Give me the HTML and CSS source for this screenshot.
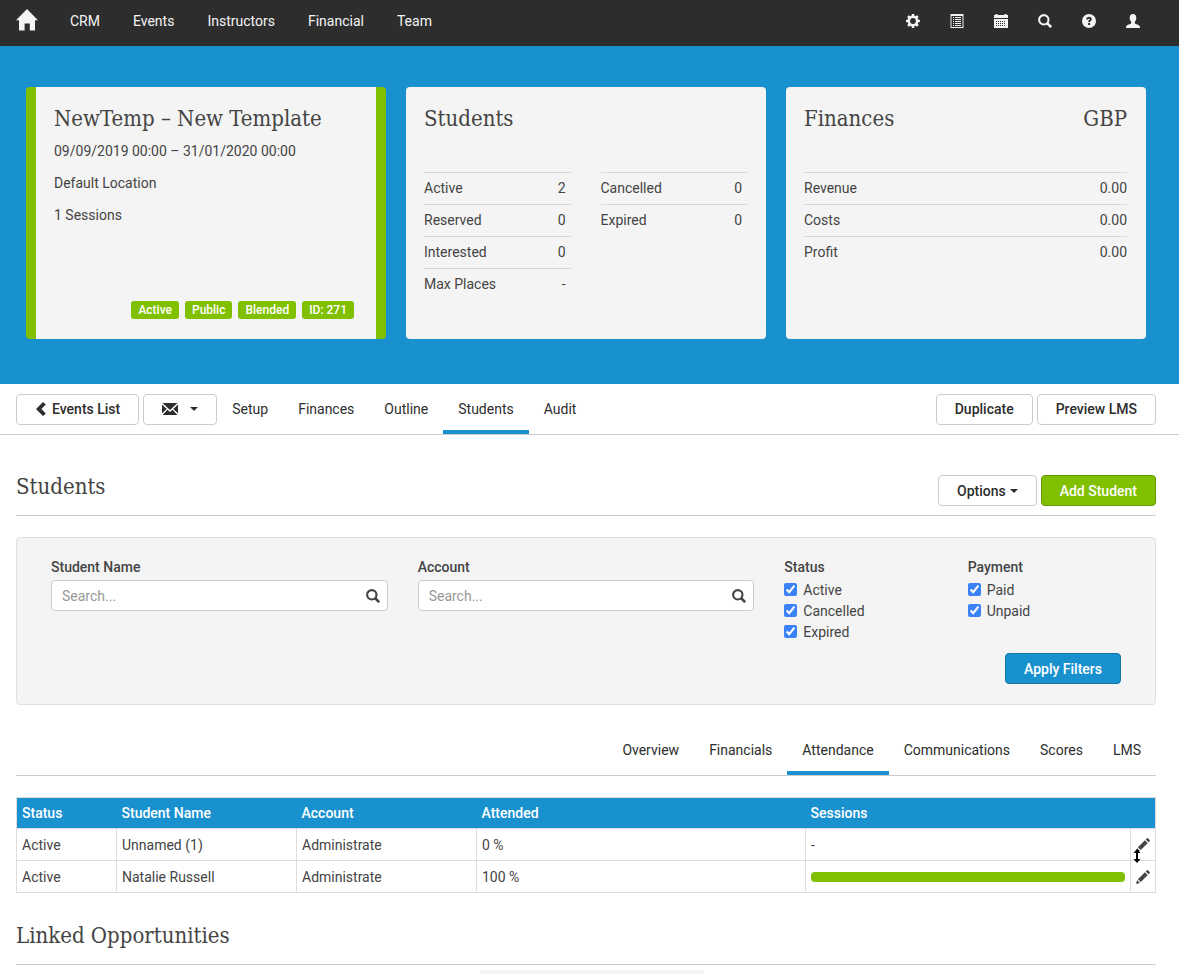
FILE: index.html
```html
<!DOCTYPE html>
<html lang="en">
<head>
    <meta charset="UTF-8">
    <meta name="viewport" content="width=device-width, initial-scale=1.0">
    <title>NewTemp – New Template</title>
    <link rel="stylesheet" href="styles.css">
</head>
<body>
    <svg class="sprite" aria-hidden="true">
        <symbol id="icon-search" viewBox="0 0 14 14">
            <circle cx="5.8" cy="5.8" r="4.7" fill="none" stroke="currentColor" stroke-width="2.1"/>
            <path d="M9 9l4.2 4.2" stroke="currentColor" stroke-width="2.6"/>
        </symbol>
        <symbol id="icon-pencil" viewBox="0 0 14 14">
            <path d="M0 14l1.100-4 2.900 2.900zM1.900 9.200l7-7 2.900 2.900-7 7zM9.700 1.400L10.900.300q.5-.5 1 0l1.800 1.800q.5.500 0 1L12.600 4.300z"/>
        </symbol>
        <symbol id="icon-caret" viewBox="0 0 8 4">
            <path d="M0 0h8L4 4z"/>
        </symbol>
    </svg>

    <header class="topbar">
        <nav class="topbar-nav">
            <a href="#" class="home" aria-label="Home">
                <svg class="icon-home" viewBox="0 0 22 22"><path d="M11 0L22 11.300h-3V21.500h-5.200v-7H8.600v7H3V11.300H0z"/></svg>
            </a>
            <a href="#">CRM</a>
            <a href="#">Events</a>
            <a href="#">Instructors</a>
            <a href="#">Financial</a>
            <a href="#">Team</a>
        </nav>
        <nav class="topbar-icons">
            <a href="#" aria-label="Settings">
                <svg class="icon" viewBox="0 0 14 14"><path fill-rule="evenodd" d="M5.900 0h2.200l.4 1.800 1 .4 1.500-1L12.600 2.800l-1 1.600.4 1 1.900.4v2.300l-1.800.4-.4 1 1 1.600-1.600 1.600-1.600-1-1 .4-.4 1.900H5.900l-.4-1.800-1-.4-1.600 1-1.600-1.600 1-1.600-.4-1L0 8.100V5.900l1.800-.4.4-1-1-1.600 1.600-1.600 1.600 1 1-.4zM7 4.100a2.900 2.900 0 1 0 0 5.800 2.900 2.900 0 0 0 0-5.800z"/></svg>
            </a>
            <a href="#" aria-label="Lists">
                <svg class="icon" viewBox="0 0 14 14"><path fill-rule="evenodd" d="M.5 0h13v14H.5zM1.500 2v11h11V2zM3 3h1v1H3zM5 3h6v1H5zM3 5h1v1H3zM5 5h6v1H5zM3 7h1v1H3zM5 7h6v1H5zM3 9h1v1H3zM5 9h6v1H5zM3 11h1v1H3zM5 11h6v1H5z"/></svg>
            </a>
            <a href="#" aria-label="Calendar">
                <svg class="icon" viewBox="0 0 14 14"><path fill-rule="evenodd" d="M1.500 0h2v1h7V0h2v1H14v3H0V1h1.500zM0 5h14v9H0zM2 7v1h1V7zM4 7v1h1V7zM6 7v1h1V7zM8 7v1h1V7zM10 7v1h1V7zM2 9v1h1V9zM4 9v1h1V9zM6 9v1h1V9zM8 9v1h1V9zM10 9v1h1V9zM2 11v1h1v-1zM4 11v1h1v-1zM6 11v1h1v-1zM8 11v1h1v-1zM10 11v1h1v-1z"/></svg>
            </a>
            <a href="#" aria-label="Search"><svg class="icon"><use href="#icon-search"/></svg></a>
            <a href="#" aria-label="Help">
                <svg class="icon" viewBox="0 0 14 14"><circle cx="7" cy="7" r="7"/><path class="cutout" d="M4.300 5.500C4.300 3.600 5.500 2.700 7.100 2.700s2.700 1 2.700 2.500c0 1.600-1.700 1.700-1.700 2.900H6.100c0-2.100 1.600-1.900 1.600-2.900 0-.9-1.400-.8-1.400.3zM6.100 9.100h2v2h-2z"/></svg>
            </a>
            <a href="#" aria-label="Account">
                <svg class="icon" viewBox="0 0 14 14"><path d="M7 0c2.200 0 3.300 1.500 3.300 3.800 0 1.700-.5 3-1.500 4v1.400c.5.900 4.400 1.500 4.900 2.900.3.600.3 1.400.3 1.900H0c0-.5 0-1.300.3-1.900.5-1.400 4.400-2 4.900-2.900V7.800c-1-1-1.500-2.300-1.500-4C3.700 1.500 4.800 0 7 0z"/></svg>
            </a>
        </nav>
    </header>

    <section class="hero">
        <article class="card card-event">
            <h2 class="title">NewTemp – New Template</h2>
            <p>09/09/2019 00:00 – 31/01/2020 00:00</p>
            <p>Default Location</p>
            <p>1 Sessions</p>
            <div class="badges">
                <span class="badge">Active</span>
                <span class="badge">Public</span>
                <span class="badge">Blended</span>
                <span class="badge">ID: 271</span>
            </div>
        </article>

        <article class="card">
            <h2 class="title">Students</h2>
            <div class="stats">
                <dl class="stat-list stat-list-inset">
                    <div><dt>Active</dt><dd>2</dd></div>
                    <div><dt>Reserved</dt><dd>0</dd></div>
                    <div><dt>Interested</dt><dd>0</dd></div>
                    <div><dt>Max Places</dt><dd>-</dd></div>
                </dl>
                <dl class="stat-list stat-list-inset">
                    <div><dt>Cancelled</dt><dd>0</dd></div>
                    <div><dt>Expired</dt><dd>0</dd></div>
                </dl>
            </div>
        </article>

        <article class="card">
            <div class="card-heading">
                <h2 class="title">Finances</h2>
                <span class="title">GBP</span>
            </div>
            <div class="stats">
                <dl class="stat-list">
                    <div><dt>Revenue</dt><dd>0.00</dd></div>
                    <div><dt>Costs</dt><dd>0.00</dd></div>
                    <div><dt>Profit</dt><dd>0.00</dd></div>
                </dl>
            </div>
        </article>
    </section>

    <div class="toolbar">
        <button class="btn" type="button">
            <svg class="icon icon-back" viewBox="0 0 14 14"><path d="M8 0l2.800 2.500L6.300 7l4.500 4.500L8 14 1 7z"/></svg>
            Events List
        </button>
        <button class="btn btn-mail" type="button" aria-label="Email">
            <svg class="icon-mail" viewBox="0 0 16 14"><path d="M.5 1h15L8 8zM0 2.500L4.800 7 0 11.300zM16 2.500v8.800L11.200 7zM.5 13l5-5.200L8 10l2.500-2.200 5 5.200z"/></svg>
            <svg class="caret"><use href="#icon-caret"/></svg>
        </button>
        <nav class="tabs">
            <a href="#">Setup</a>
            <a href="#">Finances</a>
            <a href="#">Outline</a>
            <a href="#" class="active">Students</a>
            <a href="#">Audit</a>
        </nav>
        <div class="actions">
            <button class="btn" type="button">Duplicate</button>
            <button class="btn" type="button">Preview LMS</button>
        </div>
    </div>

    <main class="content">
        <div class="page-header">
            <h1 class="title">Students</h1>
            <div class="actions">
                <button class="btn" type="button">Options <svg class="caret"><use href="#icon-caret"/></svg></button>
                <button class="btn btn-success" type="button">Add Student</button>
            </div>
        </div>

        <form class="filters">
            <div class="filter-grid">
                <div class="field">
                    <label for="studentName">Student Name</label>
                    <div class="search-box">
                        <input type="text" id="studentName" placeholder="Search...">
                        <svg class="icon"><use href="#icon-search"/></svg>
                    </div>
                </div>
                <div class="field">
                    <label for="account">Account</label>
                    <div class="search-box">
                        <input type="text" id="account" placeholder="Search...">
                        <svg class="icon"><use href="#icon-search"/></svg>
                    </div>
                </div>
                <fieldset class="field">
                    <legend>Status</legend>
                    <label class="check"><input type="checkbox" checked> Active</label>
                    <label class="check"><input type="checkbox" checked> Cancelled</label>
                    <label class="check"><input type="checkbox" checked> Expired</label>
                </fieldset>
                <fieldset class="field">
                    <legend>Payment</legend>
                    <label class="check"><input type="checkbox" checked> Paid</label>
                    <label class="check"><input type="checkbox" checked> Unpaid</label>
                </fieldset>
            </div>
            <div class="filter-actions">
                <button class="btn btn-primary" type="button">Apply Filters</button>
            </div>
        </form>

        <nav class="tabs tabs-right">
            <a href="#">Overview</a>
            <a href="#">Financials</a>
            <a href="#" class="active">Attendance</a>
            <a href="#">Communications</a>
            <a href="#">Scores</a>
            <a href="#">LMS</a>
        </nav>

        <table class="students">
            <colgroup>
                <col class="col-status">
                <col class="col-name">
                <col class="col-name">
                <col class="col-attended">
                <col>
                <col class="col-edit">
            </colgroup>
            <thead>
                <tr>
                    <th>Status</th>
                    <th>Student Name</th>
                    <th>Account</th>
                    <th>Attended</th>
                    <th colspan="2">Sessions</th>
                </tr>
            </thead>
            <tbody>
                <tr>
                    <td>Active</td>
                    <td>Unnamed (1)</td>
                    <td>Administrate</td>
                    <td>0 %</td>
                    <td>-</td>
                    <td class="edit">
                        <a href="#" aria-label="Edit"><svg class="icon"><use href="#icon-pencil"/></svg></a>
                        <svg class="resize-cursor" viewBox="0 0 8 14"><path d="M4 0l3.500 4H5v6h2.500L4 14 .5 10H3V4H.5z"/></svg>
                    </td>
                </tr>
                <tr>
                    <td>Active</td>
                    <td>Natalie Russell</td>
                    <td>Administrate</td>
                    <td>100 %</td>
                    <td><div class="progress"><div class="progress-bar" style="width: 100%"></div></div></td>
                    <td class="edit">
                        <a href="#" aria-label="Edit"><svg class="icon"><use href="#icon-pencil"/></svg></a>
                    </td>
                </tr>
            </tbody>
        </table>

        <div class="page-header page-header-linked">
            <h2 class="title">Linked Opportunities</h2>
        </div>
    </main>

    <div class="drawer-handle"></div>
</body>
</html>
```

FILE: styles.css
```css
* {
    box-sizing: border-box;
}
body {
    margin: 0;
    font-family: Roboto, "Liberation Sans", sans-serif;
    font-size: 14px;
    line-height: 20px;
    color: #444;
    background-color: #fff;
    overflow-x: hidden;
}
h1, h2, p, dl, dd, fieldset {
    margin: 0;
}
a {
    color: inherit;
    text-decoration: none;
}
svg {
    display: block;
    fill: currentColor;
}
.sprite {
    display: none;
}
.icon {
    width: 14px;
    height: 14px;
}
.caret {
    width: 8px;
    height: 4px;
}
.title {
    font-family: "Roboto Slab", "DejaVu Serif Condensed", "DejaVu Serif", serif;
    font-size: 22px;
    font-weight: 300;
    line-height: 24px;
}

/* Top bar */
.topbar {
    display: flex;
    justify-content: space-between;
    height: 46px;
    padding: 0 31px 4px 16px;
    background-color: #2d2d2d;
    color: #f4f4f4;
}
.topbar-nav, .topbar-icons {
    display: flex;
    align-items: center;
}
.topbar-nav {
    gap: 33px;
}
.topbar-nav .home {
    margin-right: -1px;
    padding-bottom: 2px;
}
.icon-home {
    width: 22px;
    height: 22px;
}
.topbar-icons {
    gap: 30px;
    padding-right: 8px;
}
.cutout {
    fill: #2d2d2d;
}

/* Event summary */
.hero {
    display: grid;
    grid-template-columns: repeat(3, 1fr);
    gap: 20px;
    padding: 41px 33px 45px 26px;
    background-color: #1a91cf;
}
.card {
    display: flex;
    flex-direction: column;
    min-height: 252px;
    padding: 20px 19px 20px 18px;
    border-radius: 4px;
    background-color: #f4f4f4;
}
.card-event {
    border: solid #80c000;
    border-width: 0 10px;
}
.card p {
    margin-top: 12px;
}
.card .title + p {
    margin-top: 10px;
}
.card-heading {
    display: flex;
    justify-content: space-between;
}
.badges {
    display: flex;
    justify-content: flex-end;
    gap: 6px;
    margin-top: auto;
    padding-right: 3px;
}
.badge {
    padding: 0 7px;
    border-radius: 3px;
    background-color: #80c000;
    color: #fff;
    font-size: 12px;
    font-weight: 500;
    line-height: 18px;
}
.stats {
    display: flex;
    gap: 30px;
    margin-top: 41px;
}
.stat-list {
    flex: 1;
}
.stat-list div {
    display: flex;
    justify-content: space-between;
    padding: 5px 0 6px;
    border-top: 1px solid #d9d9d9;
}
.stat-list-inset div {
    padding-right: 5px;
}

/* Buttons */
.btn {
    display: flex;
    align-items: center;
    height: 31px;
    padding: 0 18px;
    border: 1px solid #ccc;
    border-radius: 4px;
    background-color: #fff;
    color: #2d2d2d;
    font: inherit;
    font-weight: 500;
    white-space: nowrap;
    cursor: pointer;
}
.btn .caret {
    margin-left: 4px;
}
.btn-success {
    border-color: #669900;
    background-color: #80c000;
    color: #fff;
}
.btn-primary {
    border-color: #1674a6;
    background-color: #1a91cf;
    color: #fff;
}
.icon-back {
    margin-right: 3px;
}
.icon-mail {
    width: 16px;
    height: 14px;
}
.btn-mail .caret {
    margin-left: 12px;
}
.actions {
    display: flex;
    gap: 4px;
    margin-left: auto;
}

/* Event toolbar */
.toolbar {
    display: flex;
    align-items: center;
    gap: 4px;
    padding: 0 23px 0 16px;
    border-bottom: 1px solid #ccc;
}
.toolbar .tabs {
    margin-left: -4px;
}
.tabs {
    display: flex;
}
.tabs a {
    padding: 15px 15px 11px;
    border-bottom: 4px solid transparent;
    color: #2d2d2d;
}
.tabs .active {
    border-bottom-color: #1a91cf;
}
.tabs-right {
    justify-content: flex-end;
    margin-top: 20px;
    border-bottom: 1px solid #ccc;
}

/* Students page */
.content {
    padding: 0 23px 0 16px;
}
.page-header {
    display: flex;
    align-items: center;
    padding: 40px 0 9px;
    border-bottom: 1px solid #ccc;
}
.page-header .title {
    padding-bottom: 7px;
}
.page-header-linked {
    padding: 31px 0 9px;
}
.filters {
    margin-top: 21px;
    padding: 19px 19px 20px;
    border: 1px solid #e0e0e0;
    border-radius: 4px;
    background-color: #f4f4f4;
}
.filter-grid {
    display: grid;
    grid-template-columns: 4fr 4fr 2fr 2fr;
}
.field {
    min-width: 0;
    padding: 0 15px;
    border: 0;
}
.field > label, legend {
    display: block;
    padding: 0;
    font-weight: 500;
}
.field .check {
    display: flex;
    align-items: center;
    gap: 6px;
    height: 21px;
    font-weight: 400;
}
legend {
    margin-bottom: 2px;
}
.check input {
    width: 13px;
    height: 13px;
    margin: 0;
    accent-color: #3b82f6;
}
.search-box {
    display: flex;
    align-items: center;
    height: 31px;
    margin-top: 3px;
    padding-right: 7px;
    border: 1px solid #ccc;
    border-radius: 4px;
    background-color: #fff;
}
.search-box input {
    flex: 1;
    min-width: 0;
    padding: 0 10px;
    border: 0;
    background: none;
    font: inherit;
    outline: none;
}
.search-box input::placeholder {
    color: #999;
}
.filter-actions {
    display: flex;
    justify-content: flex-end;
    margin-top: 11px;
    padding-right: 15px;
}

/* Attendance table */
.students {
    width: 100%;
    margin-top: 21px;
    border: 1px solid #ddd;
    border-collapse: collapse;
    table-layout: fixed;
}
.col-status {
    width: 100px;
}
.col-name {
    width: 180px;
}
.col-attended {
    width: 329px;
}
.col-edit {
    width: 25px;
}
.students th {
    padding: 5px;
    background-color: #1a91cf;
    color: #fff;
    font-weight: 500;
    text-align: left;
}
.students td {
    padding: 6px 5px 5px;
    border: 1px solid #ddd;
}
.students .edit {
    position: relative;
}
/* sits over the row divider */
.resize-cursor {
    position: absolute;
    left: 2px;
    bottom: -3px;
    width: 8px;
    height: 14px;
    color: #000;
}
.progress {
    height: 10px;
    border-radius: 4px;
    background-color: #eee;
}
.progress-bar {
    height: 100%;
    border-radius: 4px;
    background-color: #80c000;
}

.drawer-handle {
    position: fixed;
    bottom: 0;
    left: 50%;
    width: 224px;
    height: 4px;
    margin-left: -110px;
    border-radius: 12px 12px 0 0;
    background-color: #f4f4f4;
}
```
